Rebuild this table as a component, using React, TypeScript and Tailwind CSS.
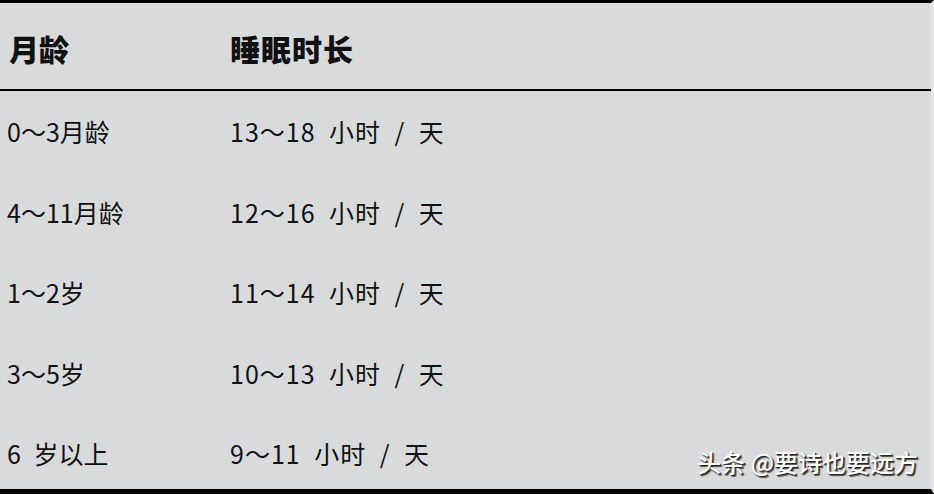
import React from 'react'

const rows = [
  { age: '0～3月龄', hours: '13～18\u2002小时\u2002/\u2002天' },
  { age: '4～11月龄', hours: '12～16\u2002小时\u2002/\u2002天' },
  { age: '1～2岁', hours: '11～14\u2002小时\u2002/\u2002天' },
  { age: '3～5岁', hours: '10～13\u2002小时\u2002/\u2002天' },
  { age: '6\u2002岁以上', hours: '9～11\u2002小时\u2002/\u2002天' },
]

export default function App() {
  return (
    <div
      className="relative h-[494px] w-[934px] overflow-hidden bg-[#d9dadc] text-[#111]"
      style={{ fontFamily: '"Noto Sans CJK SC", "Noto Sans", sans-serif' }}
    >
      <div className="flex h-full flex-col border-t-[3px] border-b-[5px] border-r-[3px] border-t-black border-b-black border-r-[#e4e5e6]">
        {/* Header */}
        <div className="flex h-[88px] shrink-0 items-center border-b-2 border-black pt-[4px] text-[30px] font-black">
          <div className="w-[230px] pl-[9px]">月龄</div>
          <div className="tracking-[1px]">睡眠时长</div>
        </div>

        {/* Rows */}
        {rows.map((row, i) => (
          <div
            key={row.age}
            className={`flex shrink-0 items-start pt-[24px] text-[25px] ${
              i === rows.length - 1 ? 'h-[74px]' : 'h-[80.5px]'
            }`}
          >
            <div className="w-[230px] pl-[7px] leading-[32px]">{row.age}</div>
            <div className="whitespace-pre leading-[32px] tracking-[1px]">{row.hours}</div>
          </div>
        ))}
      </div>

      <div
        className="absolute bottom-[20px] right-[16px] text-[24px] font-medium leading-none text-white"
        style={{ textShadow: '1px 1px 1px #222, 2px 2px 1px #555' }}
      >
        头条 @要诗也要远方
      </div>
    </div>
  )
}
